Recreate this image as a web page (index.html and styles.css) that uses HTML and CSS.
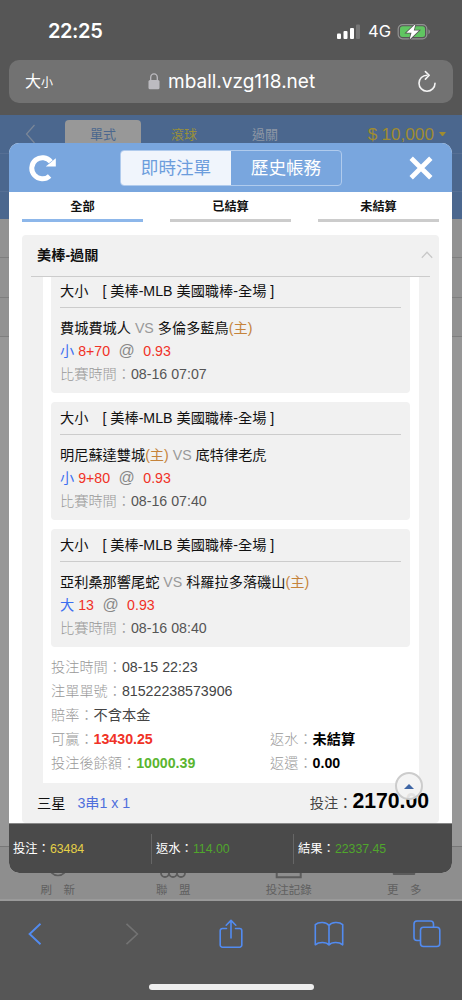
FILE: index.html
```
<!DOCTYPE html>
<html lang="zh-Hant">
<head>
    <meta charset="utf-8">
    <title>即時注單</title>
    <link rel="stylesheet" href="styles.css">
</head>
<body>

    <header class="browser-top">
      <div class="status-bar">
        <span class="clock">22:25</span>
        <div class="status-icons">
          <svg class="signal" width="24" height="16" viewBox="0 0 24 16">
            <rect x="0" y="9.5" width="4" height="5.5" rx="1" fill="#fff"/>
            <rect x="6.5" y="7" width="4" height="8" rx="1" fill="#fff"/>
            <rect x="13" y="4" width="4" height="11" rx="1" fill="#fff"/>
            <rect x="19" y="0.5" width="4" height="14.5" rx="1" fill="#777"/>
          </svg>
          <span class="network">4G</span>
          <svg class="battery" width="34" height="18" viewBox="0 0 34 18">
            <rect x="1.2" y="1.6" width="28.6" height="14.2" rx="4.3" fill="none" stroke="#929292" stroke-width="1.2"/>
            <path d="M31.5 6.2c1.8.8 1.8 4.2 0 5z" fill="#929292"/>
            <rect x="3" y="3.3" width="25" height="10.8" rx="2.5" fill="#60c561"/>
            <path d="M18.5 1 9.3 9.8h5.2L12.6 16.6 22 7.6h-5.2z" fill="#fff" stroke="#565656" stroke-width="1.6" paint-order="stroke"/>
          </svg>
        </div>
      </div>

      <div class="address-bar">
        <span class="text-size">大<small>小</small></span>
        <div class="url">
          <svg width="12" height="17" viewBox="0 0 12 17">
            <path d="M2.7 8V4.5a3.3 3.6 0 0 1 6.6 0V8" fill="none" stroke="#bcbbc0" stroke-width="1.3"/>
            <rect x="0.5" y="7" width="11" height="9.2" rx="1.5" fill="#bcbbc0"/>
          </svg>
          <span class="url-text">mball.vzg118.net</span>
        </div>
        <svg class="reload" width="20" height="24" viewBox="0 0 20 24" fill="none" stroke="#f4f4f4" stroke-width="1.6" stroke-linecap="round">
          <path d="M10 5.2a8 8 0 1 0 8 8"/>
          <path d="M8.4 1.6 12.2 5.3 8.4 9.1" stroke-linejoin="round"/>
        </svg>
      </div>
    </header>

    <main class="page">
      <div class="game-header">
        <div class="game-tabs">
          <svg class="game-back" width="11" height="20" viewBox="0 0 11 20"><path d="M9.5 1 1.5 10l8 9" fill="none" stroke="#7b8798" stroke-width="1.2"/></svg>
          <span class="game-tab active">單式</span>
          <span class="game-tab gold">滾球</span>
          <span class="game-tab">過關</span>
          <span class="balance"><span>$</span>10,000<i class="caret"></i></span>
        </div>
        <div class="game-row"></div>
        <div class="game-row"></div>
      </div>
      <div class="list-row"></div>
      <div class="list-row"></div>
      <div class="list-row"></div>
      <nav class="game-nav">
        <div class="nav-item">
          <svg width="30" height="30" viewBox="0 0 30 30"><circle cx="15" cy="15.5" r="9" fill="none" stroke="#5c5c5c" stroke-width="1.5"/></svg>
          刷&emsp;新
        </div>
        <div class="nav-item">
          <svg width="30" height="30" viewBox="0 0 30 30" fill="none" stroke="#5c5c5c" stroke-width="1.8"><circle cx="7" cy="22" r="4"/><circle cx="15" cy="22" r="4"/><circle cx="23" cy="22" r="4"/></svg>
          聯&emsp;盟
        </div>
        <div class="nav-item">
          <svg width="30" height="34" viewBox="0 0 30 34"><path d="M2.7 10v20.3h24V10z" fill="none" stroke="#5c5c5c" stroke-width="2"/></svg>
          投注記錄
        </div>
        <div class="nav-item">
          <svg width="30" height="30" viewBox="0 0 30 30"><path d="M5 9h20M5 16h20M5 22.8h20" stroke="#5c5c5c" stroke-width="2.6" stroke-linecap="round"/></svg>
          更&emsp;多
        </div>
      </nav>

      <section class="modal">
        <div class="modal-header">
          <svg width="28" height="28" viewBox="0 0 28 28">
            <path d="M20.6 22A10.6 10.6 0 1 1 21.8 7.8" fill="none" stroke="#fff" stroke-width="5"/>
            <path d="M26.8 4.2v8.2h-10z" fill="#fff"/>
          </svg>
          <div class="switch">
            <span class="switch-item on">即時注單</span>
            <span class="switch-item">歷史帳務</span>
          </div>
          <svg width="24" height="24" viewBox="0 0 24 24"><path d="M2.2 2.2 21.8 21.8M21.8 2.2 2.2 21.8" stroke="#fff" stroke-width="4.8"/></svg>
        </div>

        <div class="filters">
          <span class="filter selected">全部</span>
          <span class="filter">已結算</span>
          <span class="filter">未結算</span>
        </div>

        <div class="panel">
          <div class="panel-title">
            美棒-過關
            <svg width="12" height="8" viewBox="0 0 12 8"><path d="M.8 6.8 6 1.3l5.2 5.5" fill="none" stroke="#c8c8c8" stroke-width="1.3"/></svg>
          </div>

          <div class="ticket">
            <div class="bet first">
              <div class="bet-title">大小<span class="league">[ 美棒-MLB 美國職棒-全場 ]</span></div>
              <div class="teams">費城費城人 <span class="vs">VS</span> 多倫多藍鳥<span class="home">(主)</span></div>
              <div class="odds"><span class="pick">小</span> 8+70 <span class="at">@</span> 0.93</div>
              <div class="time"><span class="label">比賽時間：</span>08-16 07:07</div>
            </div>
            <div class="bet">
              <div class="bet-title">大小<span class="league">[ 美棒-MLB 美國職棒-全場 ]</span></div>
              <div class="teams">明尼蘇達雙城<span class="home">(主)</span> <span class="vs">VS</span> 底特律老虎</div>
              <div class="odds"><span class="pick">小</span> 9+80 <span class="at">@</span> 0.93</div>
              <div class="time"><span class="label">比賽時間：</span>08-16 07:40</div>
            </div>
            <div class="bet">
              <div class="bet-title">大小<span class="league">[ 美棒-MLB 美國職棒-全場 ]</span></div>
              <div class="teams">亞利桑那響尾蛇 <span class="vs">VS</span> 科羅拉多落磯山<span class="home">(主)</span></div>
              <div class="odds"><span class="pick">大</span> 13 <span class="at">@</span> 0.93</div>
              <div class="time"><span class="label">比賽時間：</span>08-16 08:40</div>
            </div>

            <div class="details">
              <div class="detail"><span class="label">投注時間：</span>08-15 22:23</div>
              <div class="detail"><span class="label">注單單號：</span>81522238573906</div>
              <div class="detail"><span class="label">賠率：</span>不含本金</div>
              <div class="detail split">
                <div><span class="label">可贏：</span><b class="red">13430.25</b></div>
                <div><span class="label">返水：</span><b>未結算</b></div>
              </div>
              <div class="detail split">
                <div><span class="label">投注後餘額：</span><b class="green">10000.39</b></div>
                <div><span class="label">返還：</span><b>0.00</b></div>
              </div>
            </div>
          </div>

          <div class="sum">
            <span>三星</span>
            <span class="combo">3串1 x 1</span>
            <span class="stake">投注：<b>2170.00</b></span>
          </div>
          <div class="to-top"><i></i></div>
        </div>

        <div class="totals">
          <div class="total">投注：<span class="yellow">63484</span></div>
          <div class="total">返水：<span class="lime">114.00</span></div>
          <div class="total">結果：<span class="lime">22337.45</span></div>
        </div>
      </section>
    </main>

    <footer class="browser-bottom">
      <div class="toolbar">
        <div class="tool"><svg width="14" height="24" viewBox="0 0 14 24"><path d="M12.5 1.8 1.6 12l10.9 10.2" fill="none" stroke="#528bf0" stroke-width="1.9"/></svg></div>
        <div class="tool"><svg width="14" height="24" viewBox="0 0 14 24"><path d="M1.5 1.8 12.4 12 1.5 22.2" fill="none" stroke="#737373" stroke-width="1.6"/></svg></div>
        <div class="tool">
          <svg width="24" height="30" viewBox="0 0 24 30" fill="none" stroke="#528bf0" stroke-width="1.6" stroke-linecap="round" stroke-linejoin="round">
            <path d="M7.5 9.5H3.4a2.2 2.2 0 0 0-2.2 2.2V26a2.2 2.2 0 0 0 2.2 2.2h17.2a2.2 2.2 0 0 0 2.2-2.2V11.7a2.2 2.2 0 0 0-2.2-2.2h-4.1"/>
            <path d="M12 19V1.5M7.2 6.2 12 1.4l4.8 4.8"/>
          </svg>
        </div>
        <div class="tool">
          <svg width="30" height="26" viewBox="0 0 30 26" fill="none" stroke="#528bf0" stroke-width="1.6" stroke-linejoin="round">
            <path d="M15 4.5C12.5.8 4.8.6 1.3 3.6v20.2c3.5-3 11-3 13.7.2 2.7-3.2 10.2-3.2 13.7-.2V3.6C25.2.6 17.5.8 15 4.5zM15 4.5V24"/>
          </svg>
        </div>
        <div class="tool">
          <svg width="28" height="28" viewBox="0 0 28 28" fill="none" stroke="#528bf0" stroke-width="1.6">
            <path d="M7.5 20.5H4a3 3 0 0 1-3-3V4a3 3 0 0 1 3-3h13.5a3 3 0 0 1 3 3v3"/>
            <rect x="7.5" y="7.2" width="19.3" height="19.3" rx="3"/>
          </svg>
        </div>
      </div>
      <div class="home-bar"></div>
    </footer>

</body>
</html>
```
FILE: styles.css
```
* {
  box-sizing: border-box;
}

body {
  margin: 0;
  width: 462px;
  height: 1000px;
  overflow: hidden;
  display: flex;
  flex-direction: column;
  background-color: #565656;
  font-family: "Liberation Sans", "Noto Sans CJK TC", sans-serif;
  font-size: 14.2px;
  color: #111;
}

svg {
  display: block;
  flex: none;
}

/* browser top */
.browser-top {
  height: 115px;
  padding: 0 9px;
  color: #fff;
  font-family: Inter, "Noto Sans CJK TC", sans-serif;
}

.status-bar {
  height: 60px;
  padding: 20px 22px 0 39px;
  display: flex;
  justify-content: space-between;
}

.clock {
  font-size: 20px;
  font-weight: 600;
  line-height: 23px;
  letter-spacing: -0.4px;
}

.status-icons {
  display: flex;
  align-items: center;
  height: 23px;
}

.network {
  font-size: 16.5px;
  line-height: 23px;
  width: 29px;
  margin-left: 7px;
}

.address-bar {
  height: 43px;
  padding: 0 16px;
  border-radius: 10px;
  background-color: #727272;
  display: flex;
  align-items: center;
}

.text-size {
  width: 123px;
  font-size: 16px;
  line-height: 20px;
}

.text-size small {
  font-size: 12px;
}

.url {
  display: flex;
  align-items: center;
  gap: 8px;
}

.url-text {
  font-size: 19px;
  line-height: 24px;
}

.reload {
  margin-left: auto;
}

/* game page behind the dialog */
.page {
  position: relative;
  height: 786px;
  display: flex;
  flex-direction: column;
  background-color: #979797;
}

.game-header {
  height: 104px;
  background-color: #4b678e;
}

.game-tabs {
  height: 38px;
  padding: 5px 16px 0 25px;
  display: flex;
}

.game-back {
  margin-top: 4px;
}

.game-tab {
  width: 76px;
  margin-right: 5px;
  line-height: 29px;
  font-size: 13px;
  text-align: center;
  color: #8e97a5;
}

.game-tab.active {
  margin-left: 29px;
  border-radius: 4px 4px 0 0;
  background-color: #989898;
  color: #4b678e;
}

.game-tab.gold {
  color: #99903a;
}

.balance {
  margin-left: auto;
  display: flex;
  color: #a08c30;
  font-size: 17.2px;
  line-height: 28px;
}

.balance span {
  margin-right: 4px;
}

.caret {
  margin: 12px 0 0 5px;
  width: 7px;
  height: 0;
  border: 3.5px solid transparent;
  border-top: 4px solid #a08c30;
  border-bottom: 0;
}

.game-row {
  height: 38px;
  border-top: 1px solid #566f94;
}

.list-row {
  height: 39.3px;
  background-color: #929292;
  border-bottom: 1px solid #7f7f7f;
}

.game-nav {
  margin-top: auto;
  height: 55px;
  display: grid;
  grid-template-columns: repeat(4, 1fr);
  background-color: #8e8e8e;
  border-top: 1px solid #777;
  border-bottom: 2px solid #9a9a9a;
}

.nav-item {
  display: flex;
  flex-direction: column;
  align-items: center;
  justify-content: flex-end;
  padding-bottom: 2px;
  font-size: 11.5px;
  line-height: 18px;
  color: #606060;
}

/* dialog */
.modal {
  position: absolute;
  left: 9px;
  top: 28px;
  width: 443px;
  height: 730px;
  overflow: hidden;
  display: flex;
  flex-direction: column;
  border-radius: 10px;
  background-color: #fff;
}

.modal-header {
  height: 49px;
  padding: 0 19px 0 20px;
  display: flex;
  align-items: center;
  background-color: #79a6de;
}

.switch {
  display: flex;
  width: 222px;
  height: 36px;
  margin: 0 auto 0 63px;
  border: 1px solid #b0cbed;
  border-radius: 4px;
  overflow: hidden;
}

.switch-item {
  flex: 1;
  line-height: 34px;
  font-size: 17.6px;
  text-align: center;
  color: #fff;
}

.switch-item.on {
  background-color: #f0f5fc;
  color: #6c9ddc;
}

.filters {
  height: 43px;
  padding: 0 13px;
  display: flex;
  justify-content: space-between;
}

.filter {
  width: 121px;
  height: 30px;
  border-bottom: 3px solid #ccc;
  font-size: 12.2px;
  font-weight: bold;
  line-height: 31px;
  text-align: center;
}

.filter.selected {
  border-color: #8db7ea;
}

.panel {
  position: relative;
  height: 588px;
  margin: 0 13px;
  border-radius: 4px;
  background-color: #f1f1f1;
}

.panel-title {
  height: 42px;
  margin: 0 9px;
  padding: 0 5px 3px 6px;
  display: flex;
  align-items: center;
  justify-content: space-between;
  border-bottom: 1px solid #ccc;
  font-weight: bold;
}

.panel-title svg {
  margin: 2px -8px 0 0;
}

.ticket {
  height: 506px;
  margin: 0 20px 0 21px;
  padding: 0 9px 0 8px;
  background-color: #fff;
}

.bet {
  height: 118px;
  margin-bottom: 9px;
  padding: 0 9px;
  border-radius: 4px;
  background-color: #f1f1f1;
}

/* scrolled slightly under the panel title */
.bet.first {
  height: 116px;
  border-radius: 0 0 4px 4px;
}

.bet.first .bet-title {
  height: 31px;
  line-height: 28px;
}

.bet-title {
  height: 33px;
  line-height: 32px;
  border-bottom: 1px solid #ccc;
}

.league {
  margin-left: 14px;
}

.teams {
  padding-top: 9px;
  line-height: 23px;
}

.vs,
.label {
  color: #999;
}

.label {
  font-weight: 300;
}

.home {
  color: #c5833b;
}

.odds {
  height: 23px;
  line-height: 22px;
  color: #f03226;
}

.pick {
  color: #3b6ef0;
}

.at {
  margin: 0 4.5px;
  font-size: 16px;
  color: #888;
}

.time {
  line-height: 22px;
  color: #555;
}

.detail {
  line-height: 24px;
  height: 24px;
  color: #444;
}

.details {
  margin-top: -1px;
}

.split {
  display: grid;
  grid-template-columns: 219px 1fr;
}

.detail b {
  color: #000;
}

.detail .red {
  color: #f03226;
}

.detail .green {
  color: #5ab530;
}

.sum {
  height: 38px;
  padding: 0 10px 0 15px;
  display: flex;
  align-items: center;
}

.combo {
  margin-left: 12px;
  color: #4f6fdc;
}

.stake {
  margin-left: auto;
  display: flex;
  align-items: center;
  color: #444;
}

.stake b {
  padding-bottom: 2px;
  font-size: 21.2px;
  line-height: 30px;
  color: #000;
}

.to-top {
  position: absolute;
  right: 16px;
  top: 537px;
  width: 28px;
  height: 28px;
  display: flex;
  align-items: center;
  justify-content: center;
  border: 2px solid #ccc;
  border-radius: 50%;
  background-color: rgba(243, 243, 243, 0.93);
}

.to-top i {
  border: 5px solid transparent;
  border-top: 0;
  border-bottom: 5px solid #3f66a5;
}

.totals {
  flex: 1;
  display: flex;
  align-items: center;
  background-color: #4a4a4a;
  border-top: 1px solid #888;
  color: #fff;
  font-size: 12.3px;
}

.total {
  width: 142px;
  height: 30px;
  padding-left: 4px;
  line-height: 30px;
}

.total + .total {
  border-left: 1px solid #666;
}

.yellow {
  color: #e5d047;
}

.lime {
  color: #50a62c;
}

/* browser bottom */
.browser-bottom {
  flex: 1;
  display: flex;
  flex-direction: column;
  align-items: center;
}

.toolbar {
  width: 100%;
  height: 65px;
  padding: 0 20px 0 19px;
  display: flex;
  align-items: center;
  justify-content: space-between;
}

/* the back arrow sits a little to the right of its slot */
.tool:first-child {
  padding-left: 1px;
}

.tool {
  width: 30px;
  display: flex;
  justify-content: center;
}

.home-bar {
  width: 165px;
  height: 6px;
  margin-top: 18px;
  border-radius: 3px;
  background-color: #eee;
}
```
